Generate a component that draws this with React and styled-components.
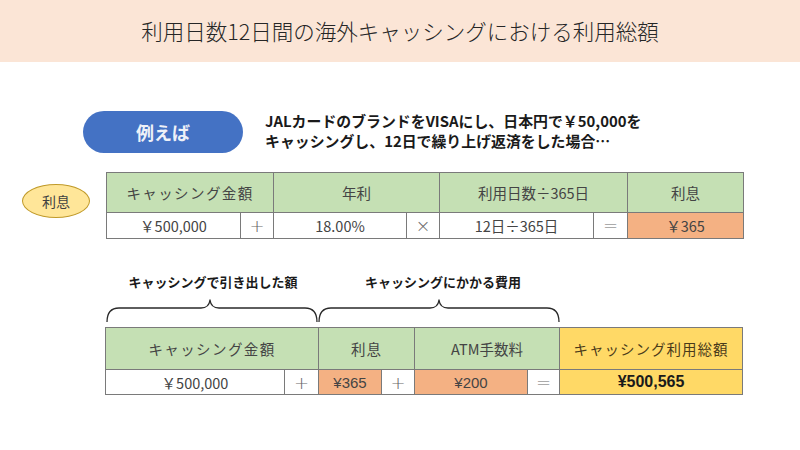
import React from "react";
import styled, { createGlobalStyle } from "styled-components";

const Global = createGlobalStyle`
  html, body { margin: 0; padding: 0; background: #fff; }
  body { font-family: "Noto Sans CJK JP", "Noto Sans", sans-serif; color: #404040; }
`;

const Page = styled.div`
  width: 800px;
  height: 450px;
  overflow: hidden;
  background: #fff;
  display: flex;
  flex-direction: column;
`;

const Header = styled.header`
  height: 62px;
  background: #fbe5d6;
  display: flex;
  align-items: center;
  justify-content: center;
`;

const Title = styled.h1`
  margin: 0;
  font-size: 21.5px;
  font-weight: 300;
  color: #262626;
  letter-spacing: 0;
  transform: translateY(-1px);
`;

const IntroRow = styled.div`
  display: flex;
  align-items: center;
  gap: 22px;
  margin-top: 49px;
  padding-left: 83px;
`;

const Pill = styled.div`
  width: 160px;
  height: 42px;
  border-radius: 21px;
  background: #4472c4;
  color: #eef1f8;
  font-weight: 700;
  font-size: 18px;
  display: flex;
  align-items: center;
  justify-content: center;
`;

const IntroText = styled.p`
  margin: 0;
  font-size: 14.9px;
  font-weight: 700;
  line-height: 20px;
  color: #1a1a1a;
  margin-top: -3px;
`;

const FormulaRow = styled.div`
  display: flex;
  align-items: flex-start;
  margin-top: 19px;
  padding-left: ${(p) => p.$left}px;
`;

const Ellipse = styled.div`
  width: 66px;
  height: 32px;
  border-radius: 50%;
  background: #ffe699;
  border: 1px solid #c09a2a;
  display: flex;
  align-items: center;
  justify-content: center;
  font-size: 14px;
  color: #404040;
  margin-top: 12px;
  margin-right: 16px;
`;

const Grid = styled.div`
  display: inline-grid;
  width: max-content;
  grid-template-columns: ${(p) => p.$cols};
  grid-template-rows: ${(p) => p.$rows};
  gap: 1px;
  padding: 1px;
  background: #7a7a7a;
`;

const Cell = styled.div`
  grid-column: span ${(p) => p.$span || 1};
  background: ${(p) => p.$bg || "#fff"};
  display: flex;
  align-items: center;
  justify-content: center;
  font-size: ${(p) => p.$size || 14.5}px;
  font-weight: ${(p) => (p.$bold ? 700 : p.$light ? 300 : 400)};
  letter-spacing: ${(p) => p.$spacing || 0}px;
  font-family: ${(p) =>
    p.$latin ? '"Liberation Sans", "Noto Sans CJK JP", sans-serif' : '"Noto Sans CJK JP", sans-serif'};
  color: ${(p) => p.$color || "#444"};
  white-space: nowrap;
`;

const Operator = styled(Cell).attrs({ $light: true, $color: "#6a6a6a", $latin: false })`
  font-size: 18px;
  font-family: "DejaVu Sans", sans-serif;
  font-weight: 200;
`;

const BraceRow = styled.div`
  display: flex;
  margin-top: 34px;
  padding-left: 106px;
`;

const BraceGroup = styled.div`
  width: ${(p) => p.$w}px;
  display: flex;
  flex-direction: column;
  align-items: center;
`;

const BraceLabel = styled.div`
  font-size: 13px;
  font-weight: 700;
  line-height: 18px;
  color: #1a1a1a;
  height: 18px;
  margin-bottom: 8px;
  transform: translateX(${(p) => p.$dx || 0}px);
`;

const TableWrap = styled.div`
  padding-left: 105px;
  margin-top: 4px;
`;

function Brace({ w, tip }) {
  const c = tip ?? w / 2;
  const d = `M1,23 Q1,9 13,9 L${c - 9},9 Q${c - 1},9 ${c},1 Q${c + 1},9 ${c + 9},9 L${w - 13},9 Q${w - 1},9 ${w - 1},23`;
  return (
    <svg width={w} height="24" viewBox={`0 0 ${w} 24`} style={{ display: "block" }}>
      <path d={d} fill="none" stroke="#2a2a2a" strokeWidth="1.3" strokeLinejoin="round" />
    </svg>
  );
}

const green = "#c5e0b4";
const orange = "#f4b183";
const yellow = "#ffd966";

export default function App() {
  return (
    <Page>
      <Global />
      <Header>
        <Title>利用日数12日間の海外キャッシングにおける利用総額</Title>
      </Header>

      <IntroRow>
        <Pill>例えば</Pill>
        <IntroText>
          JALカードのブランドをVISAにし、日本円で￥50,000を
          <br />
          キャッシングし、12日で繰り上げ返済をした場合…
        </IntroText>
      </IntroRow>

      <FormulaRow $left={22}>
        <Ellipse>利息</Ellipse>
        <Grid $cols="133px 32px 132px 32px 153px 33px 115px" $rows="39px 25px">
          <Cell $span={2} $bg={green} $spacing={1.4}>キャッシング金額</Cell>
          <Cell $span={2} $bg={green}>年利</Cell>
          <Cell $span={2} $bg={green}>利用日数÷365日</Cell>
          <Cell $bg={green}>利息</Cell>
          <Cell>￥500,000</Cell>
          <Operator>+</Operator>
          <Cell>18.00%</Cell>
          <Operator>×</Operator>
          <Cell>12日÷365日</Cell>
          <Operator>=</Operator>
          <Cell $bg={orange}>￥365</Cell>
        </Grid>
      </FormulaRow>

      <BraceRow>
        <BraceGroup $w={212}>
          <BraceLabel $dx={1}>キャッシングで引き出した額</BraceLabel>
          <Brace w={212} tip={104} />
        </BraceGroup>
        <BraceGroup $w={242}>
          <BraceLabel $dx={4}>キャッシングにかかる費用</BraceLabel>
          <Brace w={242} tip={121} />
        </BraceGroup>
      </BraceRow>

      <TableWrap>
        <Grid $cols="178px 33px 62px 32px 112px 31px 182px" $rows="41px 24px">
          <Cell $span={2} $bg={green} $spacing={1.4}>キャッシング金額</Cell>
          <Cell $span={2} $bg={green} $spacing={1}>利息</Cell>
          <Cell $span={2} $bg={green}>ATM手数料</Cell>
          <Cell $bg={yellow} $spacing={1} $color="#4a3a1a">キャッシング利用総額</Cell>
          <Cell>￥500,000</Cell>
          <Operator>+</Operator>
          <Cell $bg={orange} $latin $size={15}>¥365</Cell>
          <Operator>+</Operator>
          <Cell $bg={orange} $latin $size={15}>¥200</Cell>
          <Operator>=</Operator>
          <Cell $bg={yellow} $latin $bold $size={16} $color="#1a1a1a">¥500,565</Cell>
        </Grid>
      </TableWrap>
    </Page>
  );
}
